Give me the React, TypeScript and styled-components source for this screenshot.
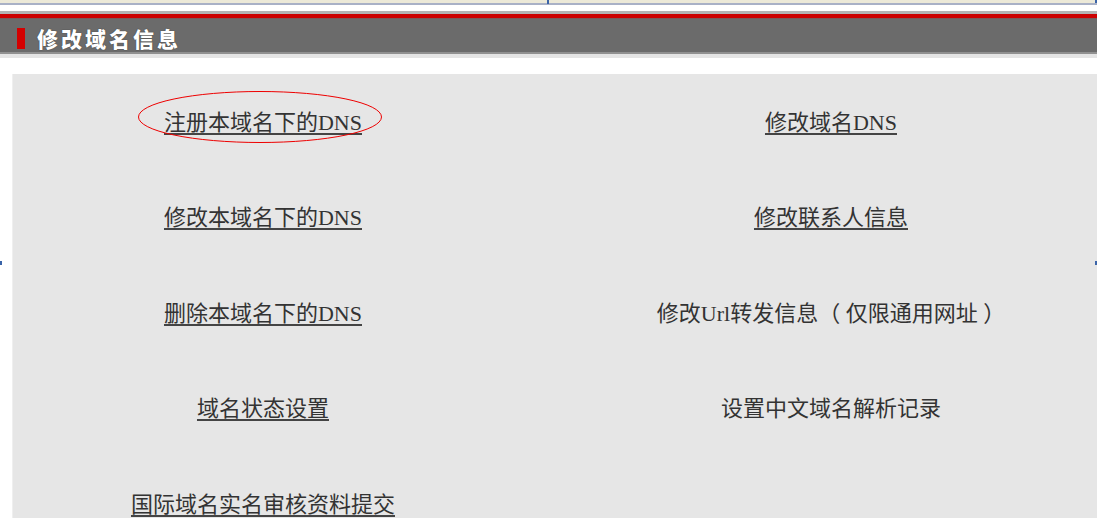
import React from 'react';
import styled, { createGlobalStyle } from 'styled-components';

const GlobalStyle = createGlobalStyle`
  html, body {
    margin: 0;
    padding: 0;
    background: #fff;
    overflow: hidden;
  }
`;

const Page = styled.div`
  position: relative;
  width: 1097px;
  height: 518px;
  overflow: hidden;
  background: #fff;
  font-family: 'Liberation Serif', 'Noto Sans CJK SC', serif;
`;

const WindowEdge = styled.div`
  height: 3px;
  background: #ece9d8;
  border-bottom: 2px solid #a9b1c6;
`;

const TopGap = styled.div`
  height: 6px;
  background: #fff;
`;

const RedRule = styled.div`
  height: 4px;
  background: #cc0000;
  border-top: 3px solid #b4b4b4;
  border-bottom: 1px solid #7a5a5a;
`;

const TitleBar = styled.div`
  height: 35px;
  display: flex;
  align-items: center;
  gap: 12px;
  padding: 6px 0 0 17px;
  box-sizing: border-box;
  background: #6b6b6b;
  border-bottom: 2px solid #909090;
`;

const Marker = styled.span`
  width: 8px;
  height: 21px;
  background: #d40000;
`;

const Title = styled.h1`
  margin: 0;
  font-family: 'Noto Sans CJK SC', sans-serif;
  font-size: 21px;
  font-weight: 900;
  letter-spacing: 3px;
  line-height: 1;
  color: #fff;
  text-shadow: 0 0 1px #222;
`;

const UnderBar = styled.div`
  height: 4px;
  background: #e4e4e4;
  margin-bottom: 16px;
`;

const Panel = styled.div`
  margin-left: 12px;
  display: grid;
  grid-template-columns: 500px 636px;
  grid-auto-rows: 95.5px;
  background: #e6e6e6;
  border-left: 1px solid #efefef;
`;

const Cell = styled.div`
  display: flex;
  align-items: center;
  justify-content: center;
  padding-bottom: 4px;
`;

const Item = styled.a<{ $plain?: boolean }>`
  position: relative;
  font-size: 22px;
  color: #333;
  cursor: pointer;
  white-space: nowrap;
  text-decoration: ${(p) => (p.$plain ? 'none' : 'underline')};
  text-decoration-thickness: 2px;
  text-underline-offset: 3px;
  text-decoration-color: #444;
`;

/* hand-drawn annotation circling the first link */
const Mark = styled.svg`
  position: absolute;
  left: -26px;
  top: -13px;
  pointer-events: none;
`;

const Handle = styled.span<{ $x: number; $y: number; $h: number }>`
  position: absolute;
  left: ${(p) => p.$x}px;
  top: ${(p) => p.$y}px;
  width: 2px;
  height: ${(p) => p.$h}px;
  background: #3a64a8;
`;

const rows: [string, string, boolean][] = [
  ['注册本域名下的DNS', '修改域名DNS', false],
  ['修改本域名下的DNS', '修改联系人信息', false],
  ['删除本域名下的DNS', '修改Url转发信息（ 仅限通用网址 ）', true],
  ['域名状态设置', '设置中文域名解析记录', true],
  ['国际域名实名审核资料提交', '', true],
];

export default function App() {
  return (
    <>
      <GlobalStyle />
      <Page>
        <WindowEdge />
        <TopGap />
        <RedRule />
        <TitleBar>
          <Marker />
          <Title>修改域名信息</Title>
        </TitleBar>
        <UnderBar />
        <Panel>
          {rows.map(([left, right, plain], i) => (
            <React.Fragment key={left}>
              <Cell>
                <Item>
                  {left}
                  {i === 0 && (
                    <Mark width="245" height="53" viewBox="0 0 245 53">
                      <ellipse cx="122" cy="26" rx="121.5" ry="25.5" fill="none" stroke="#ee0000" strokeWidth="1" />
                    </Mark>
                  )}
                </Item>
              </Cell>
              <Cell>{right && <Item $plain={plain}>{right}</Item>}</Cell>
            </React.Fragment>
          ))}
        </Panel>
        <Handle $x={547} $y={0} $h={4} />
        <Handle $x={0} $y={261} $h={4} />
        <Handle $x={1095} $y={261} $h={4} />
        <Handle $x={1095} $y={0} $h={3} />
      </Page>
    </>
  );
}
